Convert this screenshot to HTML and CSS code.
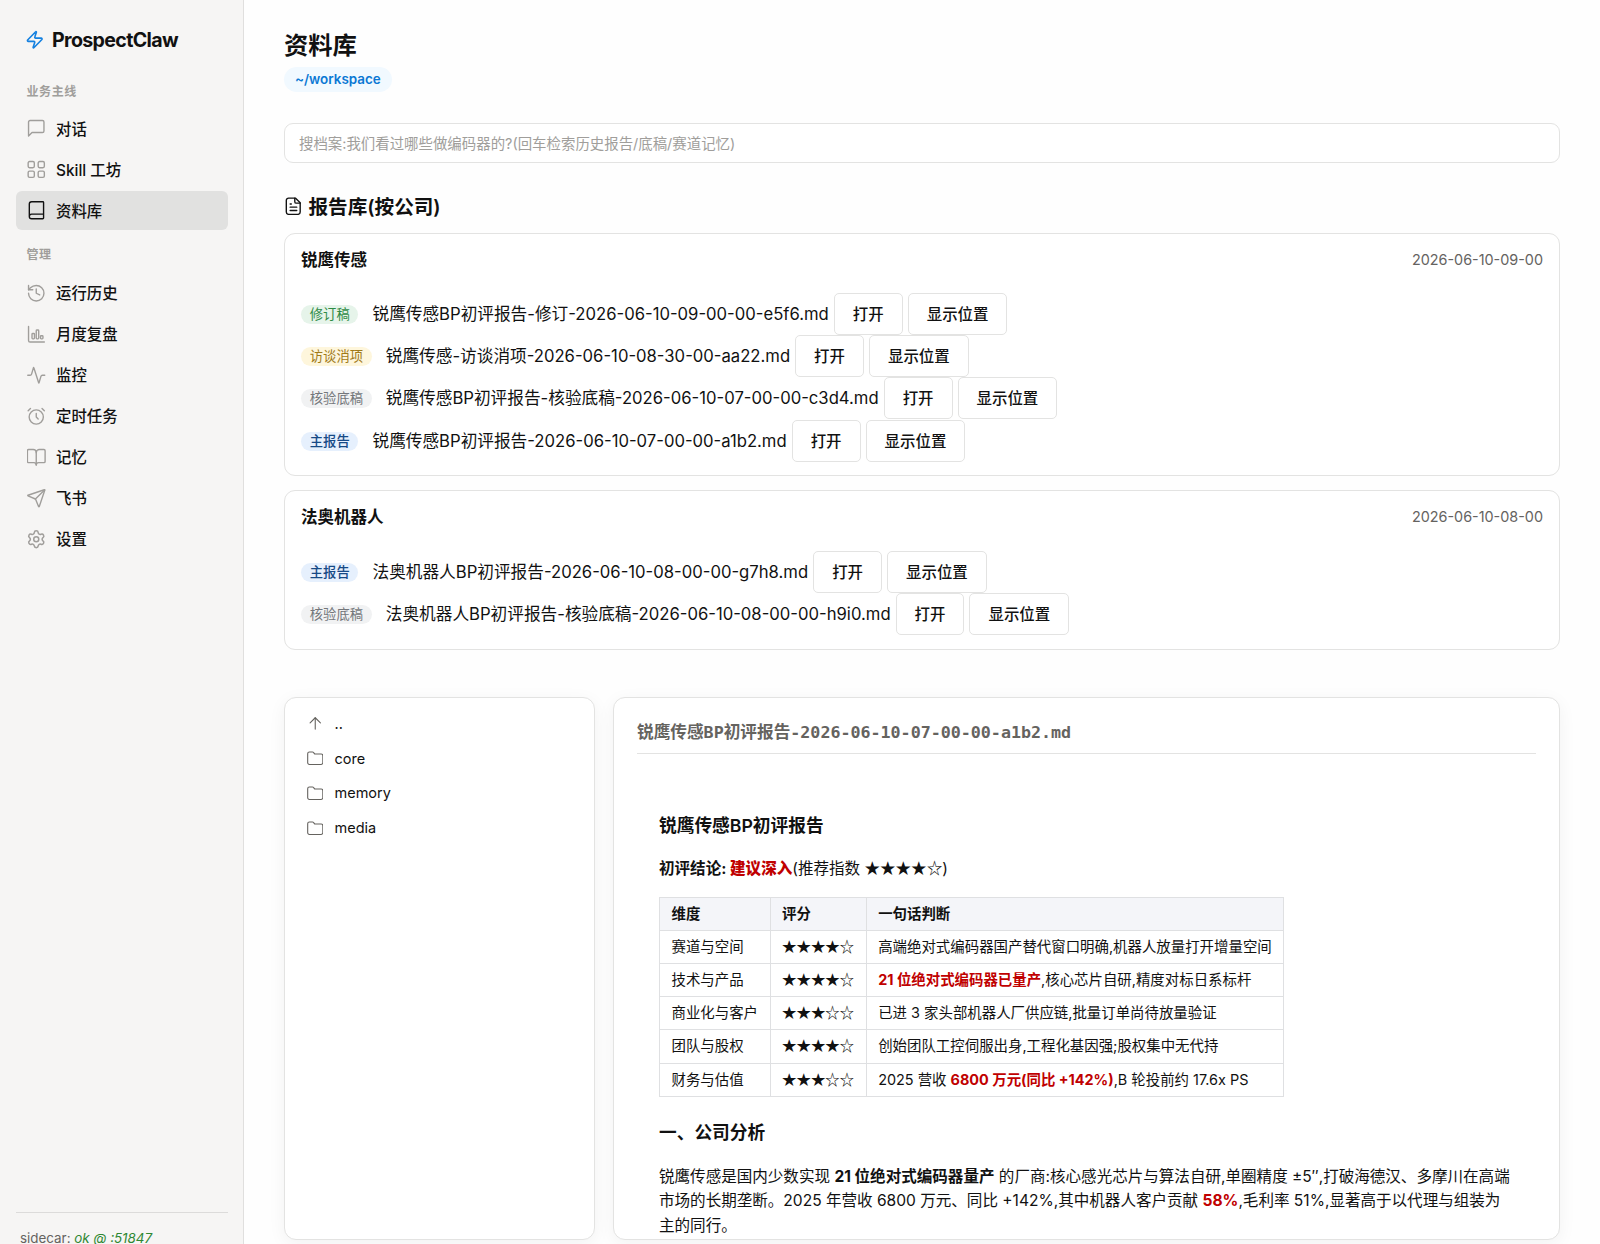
FILE: index.html
```
<!DOCTYPE html>
<html lang="zh-CN">
<head>
    <meta charset="UTF-8">
    <meta name="viewport" content="width=device-width, initial-scale=1.0">
    <title>ProspectClaw</title>
    <link rel="stylesheet" href="styles.css">
</head>
<body>
    <div class="app">
        <aside class="sidebar">
            <div class="brand">
                <svg class="icon" viewBox="0 0 24 24"><path d="M4 14a1 1 0 0 1-.78-1.63l9.9-10.2a.5.5 0 0 1 .86.46l-1.92 6.02A1 1 0 0 0 13 10h7a1 1 0 0 1 .78 1.63l-9.9 10.2a.5.5 0 0 1-.86-.46l1.92-6.02A1 1 0 0 0 11 14z"/></svg>
                <span>ProspectClaw</span>
            </div>
            <div class="nav-label">业务主线</div>
            <nav class="nav">
                <a class="nav-item">
                    <svg class="icon" viewBox="0 0 24 24"><path d="M22 15.5a2 2 0 0 1-2 2H6.5L2 22V4a2 2 0 0 1 2-2h16a2 2 0 0 1 2 2z"/></svg>
                    <span>对话</span>
                </a>
                <a class="nav-item">
                    <svg class="icon" viewBox="0 0 24 24"><rect x="1.5" y="2" width="8" height="8" rx="1.8"/><rect x="14.5" y="2" width="8" height="8" rx="1.8"/><rect x="14.5" y="14.5" width="8" height="8" rx="1.8"/><rect x="1.5" y="14.5" width="8" height="8" rx="1.8"/></svg>
                    <span>Skill 工坊</span>
                </a>
                <a class="nav-item active">
                    <svg class="icon" viewBox="0 0 24 24"><path d="M3 20V4a3 3 0 0 1 3-3h14.5a1 1 0 0 1 1 1v20a1 1 0 0 1-1 1H6a3 3 0 0 1 0-6h15.5"/></svg>
                    <span>资料库</span>
                </a>
            </nav>
            <div class="nav-label second">管理</div>
            <nav class="nav">
                <a class="nav-item">
                    <svg class="icon" viewBox="0 0 24 24"><path d="M2 12a10 10 0 1 0 10-10 10.8 10.8 0 0 0-7.5 3L2 7.5"/><path d="M2 2v5.5h5.5"/><path d="M12 6.5V12l4.5 2.2"/></svg>
                    <span>运行历史</span>
                </a>
                <a class="nav-item">
                    <svg class="icon" viewBox="0 0 24 24"><path d="M2 2v18a2 2 0 0 0 2 2h18.5"/><rect x="6.5" y="11" width="3.2" height="7" rx="1"/><rect x="12" y="6.5" width="3.2" height="11.5" rx="1"/><rect x="17.5" y="14" width="3.2" height="4" rx="1"/></svg>
                    <span>月度复盘</span>
                </a>
                <a class="nav-item">
                    <svg class="icon" viewBox="0 0 24 24"><path d="M23 12h-3a2 2 0 0 0-1.93 1.46l-2.45 8.36a.25.25 0 0 1-.48 0L8.86 2.18a.25.25 0 0 0-.48 0l-2.45 8.36A2 2 0 0 1 4 12H1"/></svg>
                    <span>监控</span>
                </a>
                <a class="nav-item">
                    <svg class="icon" viewBox="0 0 24 24"><circle cx="12" cy="13" r="9.2"/><path d="M12 8.5V13l2.5 2.5"/><path d="M4.5 2 1.5 5"/><path d="m22.5 5-3-3"/></svg>
                    <span>定时任务</span>
                </a>
                <a class="nav-item">
                    <svg class="icon" viewBox="0 0 24 24"><path d="M12 6v16"/><path d="M2 19a1.5 1.5 0 0 1-1.5-1.5V3.5A1.5 1.5 0 0 1 2 2h6a4 4 0 0 1 4 4 4 4 0 0 1 4-4h6a1.5 1.5 0 0 1 1.5 1.5v14A1.5 1.5 0 0 1 22 19h-7a3 3 0 0 0-3 3 3 3 0 0 0-3-3z"/></svg>
                    <span>记忆</span>
                </a>
                <a class="nav-item">
                    <svg class="icon" viewBox="0 0 24 24"><path d="M15 22.7a.5.5 0 0 0 .94-.02l7.1-21.1a.5.5 0 0 0-.64-.64L1.3 8.1a.5.5 0 0 0-.02.94l8.9 3.6a2 2 0 0 1 1.1 1.1z"/><path d="M22.8 1.2 10.9 13.1"/></svg>
                    <span>飞书</span>
                </a>
                <a class="nav-item">
                    <svg class="icon" viewBox="1 1 22 22"><path d="M9.671 4.136a2.34 2.34 0 0 1 4.659 0 2.34 2.34 0 0 0 3.319 1.915 2.34 2.34 0 0 1 2.33 4.033 2.34 2.34 0 0 0 0 3.831 2.34 2.34 0 0 1-2.33 4.033 2.34 2.34 0 0 0-3.319 1.915 2.34 2.34 0 0 1-4.659 0 2.34 2.34 0 0 0-3.32-1.915 2.34 2.34 0 0 1-2.33-4.033 2.34 2.34 0 0 0 0-3.831A2.34 2.34 0 0 1 6.35 6.051a2.34 2.34 0 0 0 3.319-1.915"/><circle cx="12" cy="12" r="3"/></svg>
                    <span>设置</span>
                </a>
            </nav>
            <div class="status">sidecar: <em>ok @ :51847</em></div>
        </aside>

        <main class="main">
            <h1>资料库</h1>
            <span class="path">~/workspace</span>
            <input class="search" type="text" placeholder="搜档案:我们看过哪些做编码器的?(回车检索历史报告/底稿/赛道记忆)">

            <h2 class="section-title">
                <svg class="icon" viewBox="0 0 24 24"><path d="M15 1.5H6a3 3 0 0 0-3 3v15a3 3 0 0 0 3 3h12a3 3 0 0 0 3-3v-12z"/><path d="M14 1.5V6a2 2 0 0 0 2 2h5"/><path d="M9.5 9H8"/><path d="M16.5 13.2H8"/><path d="M16.5 17.5H8"/></svg>
                <span>报告库(按公司)</span>
            </h2>

            <section class="card">
                <div class="card-head">
                    <strong>锐鹰传感</strong>
                    <span class="date">2026-06-10-09-00</span>
                </div>
                <div class="report">
                    <span class="badge green">修订稿</span>
                    <span class="name">锐鹰传感BP初评报告-修订-2026-06-10-09-00-00-e5f6.md</span>
                    <button>打开</button>
                    <button>显示位置</button>
                </div>
                <div class="report">
                    <span class="badge yellow">访谈消项</span>
                    <span class="name">锐鹰传感-访谈消项-2026-06-10-08-30-00-aa22.md</span>
                    <button>打开</button>
                    <button>显示位置</button>
                </div>
                <div class="report">
                    <span class="badge gray">核验底稿</span>
                    <span class="name">锐鹰传感BP初评报告-核验底稿-2026-06-10-07-00-00-c3d4.md</span>
                    <button>打开</button>
                    <button>显示位置</button>
                </div>
                <div class="report">
                    <span class="badge blue">主报告</span>
                    <span class="name">锐鹰传感BP初评报告-2026-06-10-07-00-00-a1b2.md</span>
                    <button>打开</button>
                    <button>显示位置</button>
                </div>
            </section>

            <section class="card">
                <div class="card-head">
                    <strong>法奥机器人</strong>
                    <span class="date">2026-06-10-08-00</span>
                </div>
                <div class="report">
                    <span class="badge blue">主报告</span>
                    <span class="name">法奥机器人BP初评报告-2026-06-10-08-00-00-g7h8.md</span>
                    <button>打开</button>
                    <button>显示位置</button>
                </div>
                <div class="report">
                    <span class="badge gray">核验底稿</span>
                    <span class="name">法奥机器人BP初评报告-核验底稿-2026-06-10-08-00-00-h9i0.md</span>
                    <button>打开</button>
                    <button>显示位置</button>
                </div>
            </section>

            <div class="browser">
                <div class="panel files">
                    <div class="file">
                        <svg class="icon" viewBox="0 0 24 24"><path d="m4.5 11.5 7.5-7.5 7.5 7.5"/><path d="M12 20.5V4"/></svg>
                        <span>..</span>
                    </div>
                    <div class="file">
                        <svg class="icon" viewBox="0 0 24 24"><path d="M20.5 21a2.5 2.5 0 0 0 2.5-2.5V8.3a2.5 2.5 0 0 0-2.5-2.5h-8.4a2 2 0 0 1-1.69-.9L9.6 3.7A2 2 0 0 0 7.93 2.8H3.5A2.5 2.5 0 0 0 1 5.3v13.2A2.5 2.5 0 0 0 3.5 21Z"/></svg>
                        <span>core</span>
                    </div>
                    <div class="file">
                        <svg class="icon" viewBox="0 0 24 24"><path d="M20.5 21a2.5 2.5 0 0 0 2.5-2.5V8.3a2.5 2.5 0 0 0-2.5-2.5h-8.4a2 2 0 0 1-1.69-.9L9.6 3.7A2 2 0 0 0 7.93 2.8H3.5A2.5 2.5 0 0 0 1 5.3v13.2A2.5 2.5 0 0 0 3.5 21Z"/></svg>
                        <span>memory</span>
                    </div>
                    <div class="file">
                        <svg class="icon" viewBox="0 0 24 24"><path d="M20.5 21a2.5 2.5 0 0 0 2.5-2.5V8.3a2.5 2.5 0 0 0-2.5-2.5h-8.4a2 2 0 0 1-1.69-.9L9.6 3.7A2 2 0 0 0 7.93 2.8H3.5A2.5 2.5 0 0 0 1 5.3v13.2A2.5 2.5 0 0 0 3.5 21Z"/></svg>
                        <span>media</span>
                    </div>
                </div>
                <div class="panel preview">
                    <div class="preview-name">锐鹰传感BP初评报告-2026-06-10-07-00-00-a1b2.md</div>
                    <article class="markdown">
                        <h3 class="title">锐鹰传感BP初评报告</h3>
                        <p><strong>初评结论: <b class="red">建议深入</b></strong>(推荐指数 <span class="stars">★★★★☆</span>)</p>
                        <table>
                            <tr><th>维度</th><th>评分</th><th>一句话判断</th></tr>
                            <tr><td>赛道与空间</td><td><span class="stars">★★★★☆</span></td><td>高端绝对式编码器国产替代窗口明确,机器人放量打开增量空间</td></tr>
                            <tr><td>技术与产品</td><td><span class="stars">★★★★☆</span></td><td><b class="red">21 位绝对式编码器已量产</b>,核心芯片自研,精度对标日系标杆</td></tr>
                            <tr><td>商业化与客户</td><td><span class="stars">★★★☆☆</span></td><td>已进 3 家头部机器人厂供应链,批量订单尚待放量验证</td></tr>
                            <tr><td>团队与股权</td><td><span class="stars">★★★★☆</span></td><td>创始团队工控伺服出身,工程化基因强;股权集中无代持</td></tr>
                            <tr><td>财务与估值</td><td><span class="stars">★★★☆☆</span></td><td>2025 营收 <b class="red">6800 万元(同比 +142%)</b>,B 轮投前约 17.6x PS</td></tr>
                        </table>
                        <h3>一、公司分析</h3>
                        <p>锐鹰传感是国内少数实现 <strong>21 位绝对式编码器量产</strong> 的厂商:核心感光芯片与算法自研,单圈精度 ±5″,打破海德汉、多摩川在高端市场的长期垄断。2025 年营收 6800 万元、同比 +142%,其中机器人客户贡献 <b class="red">58%</b>,毛利率 51%,显著高于以代理与组装为主的同行。</p>
                    </article>
                </div>
            </div>
        </main>
    </div>
</body>
</html>
```
FILE: styles.css
```
* {
    box-sizing: border-box;
}
body {
    margin: 0;
    font-family: Inter, "Noto Sans CJK SC", sans-serif;
    font-size: 16.5px;
    color: #111;
    background: #fefefe;
    overflow: hidden;
}
.app {
    display: flex;
    height: 1264px;
}
.icon {
    width: 18.5px;
    height: 18.5px;
    flex: none;
    fill: none;
    stroke: currentColor;
    stroke-width: 1.8;
    stroke-linecap: round;
    stroke-linejoin: round;
}

/* sidebar */
.sidebar {
    width: 244px;
    flex: none;
    display: flex;
    flex-direction: column;
    padding: 24px 15.5px 13px 16px;
    background: #f6f5f4;
    border-right: 1px solid #e0dfde;
}
.brand {
    display: flex;
    align-items: center;
    gap: 8px;
    height: 32px;
    padding-left: 8.5px;
    font-size: 19.6px;
    font-weight: 700;
    letter-spacing: -0.65px;
}
.brand .icon {
    width: 19.5px;
    height: 19.5px;
    color: #1581e0;
    stroke-width: 2;
}
.nav-label {
    height: 18px;
    margin: 27px 0 8px 10.5px;
    line-height: 18px;
    font-size: 12px;
    font-weight: 600;
    letter-spacing: 0.6px;
    color: #a09e9b;
}
.nav-label.second {
    margin: 16px 0 9.2px 10.5px;
}
.nav {
    display: flex;
    flex-direction: column;
    gap: 2.1px;
}
.nav-item {
    display: flex;
    align-items: center;
    gap: 10.5px;
    height: 39px;
    padding-left: 11px;
    border-radius: 6px;
    font-size: 15.4px;
    font-weight: 500;
}
.nav-item span {
    margin-top: -2px;
}
.nav-item .icon {
    color: #a09e9b;
}
.nav-item.active {
    background: #e1e1e0;
}
.nav-item.active .icon {
    color: #111;
}
.status {
    margin-top: auto;
    height: 39px;
    padding: 15px 0 0 4px;
    border-top: 1px solid #dcdbda;
    line-height: 20px;
    font-size: 13.4px;
    color: #65635f;
}
.status em {
    color: #2f8732;
}

/* main column */
.main {
    flex: 1;
    min-width: 0;
    display: flex;
    flex-direction: column;
    align-items: stretch;
    padding: 27px 40px 24px 40px;
}
h1 {
    margin: 0;
    line-height: 36px;
    font-size: 24.3px;
    font-weight: 600;
}
.path {
    align-self: flex-start;
    margin-top: 4px;
    padding: 0 11px;
    border-radius: 13px;
    line-height: 25px;
    font-size: 13.4px;
    font-weight: 600;
    color: #0b78d4;
    background: #f1f9ff;
}
.search {
    height: 40px;
    margin-top: 31px;
    padding: 0 14px;
    border: 1px solid #e3e3e2;
    border-radius: 9px;
    font-family: inherit;
    font-size: 14.43px;
    background: #fff;
}
.search::placeholder {
    color: #a09e9b;
}
.section-title {
    display: flex;
    align-items: center;
    gap: 6px;
    height: 28px;
    margin: 29px 0 13px;
    font-size: 19.6px;
    font-weight: 600;
}
.section-title span {
    margin-top: -2px;
}
.card {
    height: 243px;
    flex: none;
    padding: 16px 16px 0;
    border: 1px solid #e3e3e2;
    border-radius: 11px;
    background: #fff;
}
.card + .card {
    height: 159.5px;
    margin-top: 14px;
}
.card-head {
    display: flex;
    justify-content: space-between;
    align-items: center;
    height: 20px;
    margin-bottom: 23px;
}
.card + .card .card-head {
    margin-bottom: 23.5px;
}
.card-head strong {
    margin-top: -3px;
    font-weight: 600;
}
.date {
    margin-top: -2px;
    font-size: 14.4px;
    color: #65635f;
}
.report {
    display: flex;
    align-items: center;
    gap: 5px;
    height: 42.2px;
}
.report .name {
    margin-top: -2px;
    font-size: 16.67px;
}
.report button {
    height: 42px;
    padding: 0 18px 2px;
    border: 1px solid #e3e3e2;
    border-radius: 5px;
    font-family: inherit;
    font-size: 15.45px;
    font-weight: 500;
    color: #111;
    background: #fff;
}
.badge {
    margin: 1px 9px 0 0;
    padding: 0 8.8px;
    border-radius: 10px;
    line-height: 19px;
    font-size: 13.3px;
}
.badge.green {
    color: #2e8b45;
    background: #e6f4ea;
}
.badge.yellow {
    color: #a07a18;
    background: #fef6dc;
}
.badge.gray {
    color: #74777b;
    background: #f1f2f3;
}
.badge.blue {
    color: #174a86;
    background: #e6f0fd;
    font-weight: 500;
}

/* workspace browser */
.browser {
    display: grid;
    grid-template-columns: 311px 1fr;
    gap: 18px;
    flex: 1;
    min-height: 0;
    margin-top: 47px;
}
.panel {
    overflow: hidden;
    border: 1px solid #e3e3e2;
    border-radius: 12px;
    background: #fff;
    box-shadow: 0 4px 18px rgba(0, 0, 0, 0.05);
}
.files {
    padding: 8.5px 21.5px;
}
.file {
    display: flex;
    align-items: center;
    gap: 11.5px;
    height: 34.8px;
    font-size: 14.5px;
}
.file .icon {
    width: 16.5px;
    height: 16.5px;
    color: #65635f;
    stroke-width: 1.6;
}
.preview {
    padding: 16px 23px 0;
}
.preview-name {
    height: 40px;
    border-bottom: 1px solid #e3e3e2;
    line-height: 37px;
    font-family: "DejaVu Sans Mono", "Noto Sans CJK SC", monospace;
    font-size: 16.66px;
    font-weight: 600;
    color: #65635f;
}
.markdown {
    padding: 58px 22px 0;
    font-size: 15.55px;
    line-height: 24.6px;
}
.markdown h3 {
    margin: 0 0 18px;
    line-height: 28px;
    font-size: 17.7px;
    font-weight: 600;
}
.markdown h3.title {
    margin-bottom: 17px;
}
.markdown p {
    margin: 0 0 15.5px;
}
.markdown table {
    margin-bottom: 22px;
    border-collapse: collapse;
    font-size: 14.43px;
}
.markdown th, .markdown td {
    height: 33.2px;
    padding: 0 11.5px;
    border: 1px solid #dfe0e2;
    line-height: 22px;
    text-align: left;
    white-space: nowrap;
}
.markdown th {
    font-weight: 600;
    background: #f4f5f9;
}
/* line-height 1 keeps the star font from stretching the row */
.stars {
    font-family: "Noto Sans CJK SC", sans-serif;
    line-height: 1;
}
.red {
    color: #c00000;
}
```
